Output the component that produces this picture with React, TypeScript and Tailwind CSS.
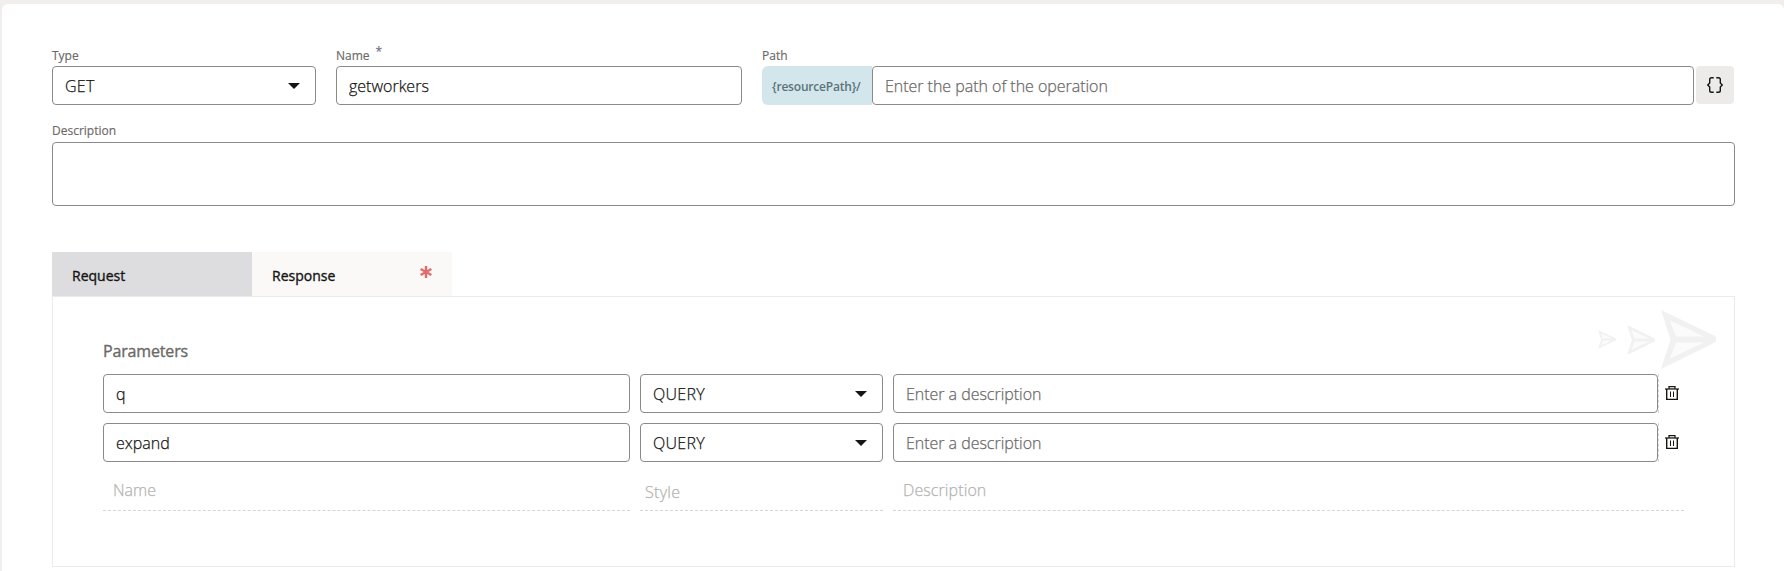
import React from "react";

const TEXT = "text-[16px] font-light [-webkit-text-stroke:0.25px_currentColor]";

function Caret() {
  return (
    <svg width="12" height="6" viewBox="0 0 12 6" className="shrink-0">
      <path d="M0 0h12L6 6z" fill="#161513" />
    </svg>
  );
}

function Label({ children }: { children: React.ReactNode }) {
  return (
    <div className="h-5 text-[12px] leading-5 text-[#6b6967] [-webkit-text-stroke:0.15px_currentColor]">{children}</div>
  );
}

function Select({ value, className }: { value: string; className: string }) {
  return (
    <div className={`flex h-[39px] items-center justify-between rounded-[4px] border border-[#8b8a89] bg-white pl-3 pr-[15px] text-[#161513] ${className}`}>
      <span className={`${TEXT} leading-6 tracking-[0.3px]`}>{value}</span>
      <Caret />
    </div>
  );
}

function Field({ value, placeholder, className }: { value?: string; placeholder?: string; className: string }) {
  return (
    <div className={`flex h-[39px] items-center rounded-[4px] border border-[#8b8a89] bg-white px-3 ${className}`}>
      <span className={`${TEXT} leading-6 ${value ? "tracking-[0px] text-[#161513]" : "tracking-[-0.03px] text-[#6b6967]"}`}>
        {value || placeholder}
      </span>
    </div>
  );
}

function Trash() {
  return (
    <svg width="14" height="14" viewBox="0 0 14 14" className="shrink-0" fill="none" stroke="#161513">
      <path d="M4 2h6" stroke="#9a9998" />
      <path d="M0 3h14" strokeWidth="1.2" />
      <path d="M4 3V.5h6V3" strokeWidth="1.2" />
      <path d="M1.700 3v10.400h10.600V3" strokeWidth="1.4" />
      <path d="M5.500 5.500v5.500M8.500 5.500v5.500" />
    </svg>
  );
}

function Plane({ className }: { className: string }) {
  return (
    <svg viewBox="0 0 55 60" preserveAspectRatio="none" className={`shrink-0 ${className}`}>
      <path d="M0 0L55 27V32.500L0 60L9.500 30Z" fill="#f1f1f1" />
      <path d="M8.500 10.500L43 27H15ZM8.500 49.500L43 33H15Z" fill="#fbfbfb" />
    </svg>
  );
}

function ParamRow({ name }: { name: string }) {
  return (
    <div className="flex h-[39px] items-center">
      <Field value={name} className="w-[527px]" />
      <Select value="QUERY" className="ml-2.5 w-[243px]" />
      <Field placeholder="Enter a description" className="ml-2.5 w-[765px]" />
      <div className="h-full w-px border-l border-dashed border-[#d6d5d4]" />
      <div className="mb-px ml-1.5">
        <Trash />
      </div>
    </div>
  );
}

export default function App() {
  return (
    <div className="h-[571px] w-[1784px] overflow-hidden bg-[#f1efed] pl-0.5 pt-1 font-['Open_Sans',sans-serif]">
      <div className="h-[580px] rounded-[6px] bg-white pl-[50px] pt-[42px]">
        <div className="flex">
          <div className="w-[264px]">
            <Label>Type</Label>
            <Select value="GET" className="w-[264px]" />
          </div>
          <div className="ml-5 w-[406px]">
            <Label>
              Name<span className="relative -top-1 ml-1.5 text-[#716a86]">*</span>
            </Label>
            <Field value="getworkers" className="w-[406px]" />
          </div>
          <div className="ml-5">
            <Label>Path</Label>
            <div className="flex">
              <div className="flex h-[39px] w-[110px] items-center rounded-l-[6px] bg-[#d2e6eb] pl-2.5 pt-0.5 text-[12px] font-semibold tracking-[-0.2px] text-[#5c7378]">
                {"{resourcePath}/"}
              </div>
              <Field placeholder="Enter the path of the operation" className="w-[822px]" />
              <div className="ml-0.5 flex h-[38px] w-[38px] items-center justify-center rounded-[4px] bg-[#ecebea]">
                <svg width="16" height="16" viewBox="0 0 16 16" fill="none" stroke="#161513" strokeWidth="1.4">
                  <path d="M6.700.700H4.500Q2.700.700 2.700 2.500V6L.8 8L2.700 10V13.500Q2.700 15.300 4.500 15.300H6.700M9.300.700H11.500Q13.300.700 13.300 2.500V6L15.200 8L13.300 10V13.500Q13.300 15.300 11.500 15.300H9.300" />
                </svg>
              </div>
            </div>
          </div>
        </div>

        <div className="mt-4 flex flex-col gap-px">
          <Label>Description</Label>
          <div className="h-16 w-[1683px] rounded-[4px] border border-[#8b8a89]" />
        </div>

        <div className="mt-[46px] flex h-11 text-[14px] text-[#161513] [-webkit-text-stroke:0.35px_currentColor]">
          <div className="flex w-[200px] items-center bg-[#dddde0] pl-5 pt-0.5">Request</div>
          <div className="flex w-[200px] items-center justify-between bg-[#faf9f8] pl-5 pr-5">
            <span className="pt-0.5">Response</span>
            <svg width="12" height="12" viewBox="0 0 12 12" stroke="#e46b6b" strokeWidth="2.4" className="mb-1">
              <path d="M6 0v12M.6 3l10.800 6M.6 9l10.800-6" />
            </svg>
          </div>
        </div>

        <div className="relative h-[271px] w-[1683px] border border-[#ebebeb] pl-[50px] pt-[42px]">
          <div className="absolute right-[18px] top-[13px] flex items-center">
            <Plane className="h-[19px] w-[18px]" />
            <Plane className="ml-[11px] h-[30px] w-[28px]" />
            <Plane className="ml-[6px] h-[59px] w-[55px]" />
          </div>
          <div className="h-[35px] text-[16px] leading-6 tracking-[-0.16px] text-[#6b6967] [-webkit-text-stroke:0.35px_currentColor]">
            Parameters
          </div>
          <div className="flex flex-col gap-2.5">
            <ParamRow name="q" />
            <ParamRow name="expand" />
          </div>
          <div className="mt-[9px] flex h-10 text-[16px] font-light leading-6 text-[#b4b3b2] [-webkit-text-stroke:0.25px_currentColor]">
            <div className="w-[527px] border-b border-dashed border-[#d6d5d4] pl-2.5 pt-[7px]">Name</div>
            <div className="ml-2.5 w-[243px] border-b border-dashed border-[#d6d5d4] pl-[5px] pt-[9px] tracking-[0.3px]">Style</div>
            <div className="ml-2.5 w-[791px] border-b border-dashed border-[#d6d5d4] pl-2.5 pt-[7px] tracking-[0.1px]">Description</div>
          </div>
        </div>
      </div>
    </div>
  );
}
